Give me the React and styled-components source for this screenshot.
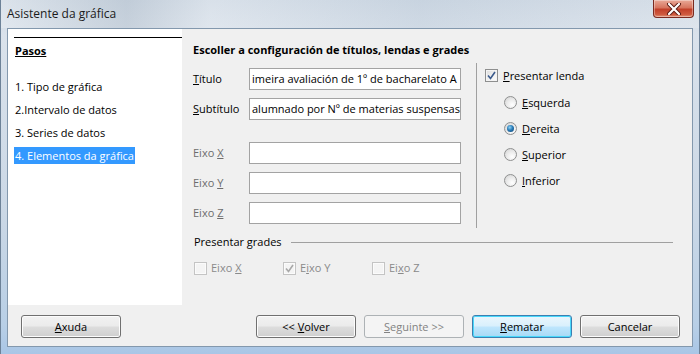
import React from 'react'
import styled, { createGlobalStyle, css } from 'styled-components'

const GlobalStyle = createGlobalStyle`
  html, body {
    margin: 0;
    padding: 0;
    background: #6f8fa8;
  }
  body {
    font-family: "Open Sans", "Noto Sans", sans-serif;
    font-size: 11px;
    color: #000;
  }
`

const steps = ['1. Tipo de gráfica', '2.Intervalo de datos', '3. Series de datos', '4. Elementos da gráfica']

function Mn({ text, at }) {
    return (
        <>
            {text.slice(0, at)}
            <Under>{text[at]}</Under>
            {text.slice(at + 1)}
        </>
    )
}

function CheckBox({ checked, disabled }) {
    return (
        <Box $disabled={disabled}>
            {checked && (
                <svg width="9" height="9" viewBox="0 0 9 9">
                    <path d="M1 4.5 L3.5 7.5 L8 1" fill="none" stroke={disabled ? '#a8a8a8' : '#3b5a8c'} strokeWidth="1.6" />
                </svg>
            )}
        </Box>
    )
}

function App() {
    return (
        <>
            <GlobalStyle />
            <Window>
                <TitleBar>
                    <Caption>Asistente da gráfica</Caption>
                    <CloseButton>
                        <svg width="16" height="12" viewBox="0 0 16 12">
                            <path d="M3 1 L13 11 M13 1 L3 11" stroke="#5a1a12" strokeWidth="4" strokeLinecap="round" />
                            <path d="M3 1 L13 11 M13 1 L3 11" stroke="#fff" strokeWidth="2.2" strokeLinecap="round" />
                        </svg>
                    </CloseButton>
                </TitleBar>
                <Client>
                    <Body>
                        <Sidebar>
                            <StepsHead>Pasos</StepsHead>
                            <StepList>
                                {steps.map((s, i) => (
                                    <Step key={s} $active={i === 3}>{s}</Step>
                                ))}
                            </StepList>
                        </Sidebar>
                        <Content>
                            <Heading>Escoller a configuración de títulos, lendas e grades</Heading>
                            <Top>
                                <Form>
                                    <FieldRow>
                                        <FieldLabel><Mn text="Título" at={0} /></FieldLabel>
                                        <TextBox>imeira avaliación de 1º de bacharelato A</TextBox>
                                    </FieldRow>
                                    <FieldRow>
                                        <FieldLabel><Mn text="Subtítulo" at={0} /></FieldLabel>
                                        <TextBox>alumnado por Nº de materias suspensas</TextBox>
                                    </FieldRow>
                                    <AxisGroup>
                                        <FieldRow>
                                            <FieldLabel $disabled><Mn text="Eixo X" at={5} /></FieldLabel>
                                            <TextBox />
                                        </FieldRow>
                                        <FieldRow>
                                            <FieldLabel $disabled><Mn text="Eixo Y" at={5} /></FieldLabel>
                                            <TextBox />
                                        </FieldRow>
                                        <FieldRow>
                                            <FieldLabel $disabled><Mn text="Eixo Z" at={5} /></FieldLabel>
                                            <TextBox />
                                        </FieldRow>
                                    </AxisGroup>
                                </Form>
                                <VRule />
                                <Legend>
                                    <CheckRow>
                                        <CheckBox checked />
                                        <span><Mn text="Presentar lenda" at={0} /></span>
                                    </CheckRow>
                                    <Radios>
                                        <RadioRow><Radio /><span><Mn text="Esquerda" at={0} /></span></RadioRow>
                                        <RadioRow><Radio $checked /><span><Mn text="Dereita" at={0} /></span></RadioRow>
                                        <RadioRow><Radio /><span><Mn text="Superior" at={0} /></span></RadioRow>
                                        <RadioRow><Radio /><span><Mn text="Inferior" at={0} /></span></RadioRow>
                                    </Radios>
                                </Legend>
                            </Top>
                            <GroupTitle>
                                <span>Presentar grades</span>
                                <HRule />
                            </GroupTitle>
                            <GridChecks>
                                <GridItem><CheckBox disabled /><span>Eixo <Under>X</Under></span></GridItem>
                                <GridItem><CheckBox checked disabled /><span>E<Under>i</Under>xo Y</span></GridItem>
                                <GridItem><CheckBox disabled /><span>Ei<Under>x</Under>o Z</span></GridItem>
                            </GridChecks>
                        </Content>
                    </Body>
                    <ButtonBar>
                        <Button $push><Mn text="Axuda" at={0} /></Button>
                        <Button>{'<< '}<Mn text="Volver" at={0} /></Button>
                        <Button $disabled><Mn text="Seguinte" at={0} />{' >>'}</Button>
                        <Button $default><Mn text="Rematar" at={0} /></Button>
                        <Button>Cancelar</Button>
                    </ButtonBar>
                </Client>
            </Window>
        </>
    )
}

export default App

const Window = styled.div`
    width: 700px;
    height: 354px;
    box-sizing: border-box;
    display: flex;
    flex-direction: column;
    padding: 0 6px 7px 6px;
    background: linear-gradient(180deg, #cfd9e4 0%, #dae2eb 10%, #cbd8e6 60%, #b8cfe6 92%, #a9c6e6 100%);
    border-left: 1px solid #6d8298;
    border-right: 1px solid #6d8298;
`

const TitleBar = styled.div`
    height: 28px;
    display: flex;
    justify-content: space-between;
    align-items: flex-start;
    background: linear-gradient(90deg, rgba(255,255,255,0.25) 0%, rgba(150,165,180,0.25) 18%, rgba(255,255,255,0.2) 30%, rgba(160,180,200,0.15) 60%, rgba(255,255,255,0.15) 100%);
    margin: 0 -6px;
    padding: 0 6px;
`

const Caption = styled.div`
    font-size: 12px;
    line-height: 16px;
    margin-top: 6px;
    color: #1b1b1b;
`

const CloseButton = styled.div`
    width: 41px;
    height: 18px;
    box-sizing: border-box;
    margin-right: -1px;
    display: flex;
    align-items: center;
    justify-content: center;
    border: 1px solid #7a2a20;
    border-top: none;
    border-radius: 0 0 4px 4px;
    background: linear-gradient(180deg, #e9a998 0%, #d7755f 45%, #c2402a 55%, #cf5a3f 85%, #e39478 100%);
    box-shadow: inset 0 0 0 1px rgba(255,255,255,0.35);
`

const Client = styled.div`
    flex: 1;
    display: flex;
    flex-direction: column;
    background: #f0f0f0;
    border: 1px solid #8398ad;
`

const Body = styled.div`
    height: 276px;
    display: flex;
`

const Sidebar = styled.div`
    width: 174px;
    background: #fff;
    padding-left: 6px;
    box-sizing: border-box;
`

const StepsHead = styled.div`
    margin-top: 8px;
    border-top: 1px solid #000;
    padding-top: 5px;
    padding-left: 1px;
    font-weight: 700;
    line-height: 16px;
    text-decoration: underline;
`

const StepList = styled.div`
    margin-top: 19px;
    display: flex;
    flex-direction: column;
    align-items: flex-start;
    gap: 6px;
`

const Step = styled.div`
    line-height: 17px;
    padding: 0 1px;
    ${p => p.$active && css`
        background: #3399ff;
        color: #fff;
    `}
`

const Content = styled.div`
    flex: 1;
    padding: 13px 19px 0 11px;
    display: flex;
    flex-direction: column;
`

const Heading = styled.div`
    font-weight: 700;
    line-height: 16px;
`

const Top = styled.div`
    margin-top: 5px;
    height: 165px;
    display: flex;
`

const Form = styled.div`
    width: 268px;
    padding-top: 5px;
    display: flex;
    flex-direction: column;
    gap: 8px;
`

const AxisGroup = styled.div`
    margin-top: 14px;
    display: flex;
    flex-direction: column;
    gap: 8px;
`

const FieldRow = styled.div`
    display: flex;
    align-items: center;
    height: 22px;
`

const FieldLabel = styled.div`
    width: 56px;
    flex: none;
    margin-top: -2px;
    color: ${p => (p.$disabled ? '#6d6d6d' : '#000')};
`

const TextBox = styled.div`
    width: 212px;
    height: 22px;
    box-sizing: border-box;
    border: 1px solid #a3a3a3;
    background: #fff;
    padding: 0 2px;
    line-height: 20px;
    white-space: nowrap;
    overflow: hidden;
`

const VRule = styled.div`
    width: 1px;
    margin-left: 15px;
    background: #a0a0a0;
`

const Legend = styled.div`
    padding-left: 8px;
    padding-top: 1px;
`

const CheckRow = styled.div`
    display: flex;
    align-items: center;
    gap: 5px;
    height: 22px;
`

const Box = styled.span`
    width: 13px;
    height: 13px;
    box-sizing: border-box;
    display: inline-flex;
    align-items: center;
    justify-content: center;
    border: 1px solid ${p => (p.$disabled ? '#c4c4c4' : '#8e8f8f')};
    background: ${p => (p.$disabled
        ? '#f4f4f4'
        : 'linear-gradient(135deg, #dcdcdc 0%, #f2f2f2 60%, #fdfdfd 100%)')};
    box-shadow: inset 0 0 0 1px ${p => (p.$disabled ? '#fbfbfb' : '#f4f4f4')};
    flex: none;
`

const Radios = styled.div`
    padding-left: 19px;
    margin-top: 3px;
    display: flex;
    flex-direction: column;
`

const RadioRow = styled.div`
    height: 26px;
    display: flex;
    align-items: center;
    gap: 5px;
`

const Radio = styled.span`
    width: 13px;
    height: 13px;
    box-sizing: border-box;
    border-radius: 50%;
    border: 1px solid #8f9090;
    background: radial-gradient(circle at 65% 70%, #ffffff 0%, #eaeaea 50%, #cfcfcf 100%);
    display: inline-flex;
    align-items: center;
    justify-content: center;
    flex: none;
    ${p => p.$checked && css`
        &::after {
            content: '';
            width: 7px;
            height: 7px;
            border-radius: 50%;
            background: radial-gradient(circle at 40% 35%, #8fd4f5 0%, #2a7cb8 45%, #0d3d6b 100%);
        }
    `}
`

const GroupTitle = styled.div`
    margin-top: 6px;
    display: flex;
    align-items: center;
    line-height: 16px;
    span { margin-left: 1px; }
`

const HRule = styled.div`
    flex: 1;
    height: 1px;
    margin-left: 9px;
    background: #a0a0a0;
`

const GridChecks = styled.div`
    margin-top: 10px;
    padding-left: 1px;
    display: flex;
`

const GridItem = styled.div`
    width: 89px;
    display: flex;
    align-items: center;
    gap: 4px;
    color: #8a8a8a;
    line-height: 16px;
`

const Under = styled.span`
    text-decoration: underline;
`

const ButtonBar = styled.div`
    flex: 1;
    display: flex;
    align-items: flex-start;
    padding: 10px 12px 0 13px;
    gap: 8px;
`

const Button = styled.div`
    width: 100px;
    height: 23px;
    box-sizing: border-box;
    display: flex;
    align-items: center;
    justify-content: center;
    white-space: pre;
    border: 1px solid #707070;
    border-radius: 3px;
    background: linear-gradient(180deg, #f2f2f2 0%, #ebebeb 48%, #dddddd 52%, #cfcfcf 100%);
    box-shadow: inset 0 0 0 1px #fcfcfc;
    ${p => p.$push && css`margin-right: auto;`}
    ${p => p.$default && css`
        border-color: #3c7fb1;
        box-shadow: inset 0 0 0 1px #48d8fb;
        background: linear-gradient(180deg, #eaf6fd 0%, #d9f0fc 48%, #bee6fd 52%, #a7d9f5 100%);
    `}
    ${p => p.$disabled && css`
        border-color: #adb2b5;
        background: #f4f4f4;
        color: #838383;
        box-shadow: none;
    `}
`
